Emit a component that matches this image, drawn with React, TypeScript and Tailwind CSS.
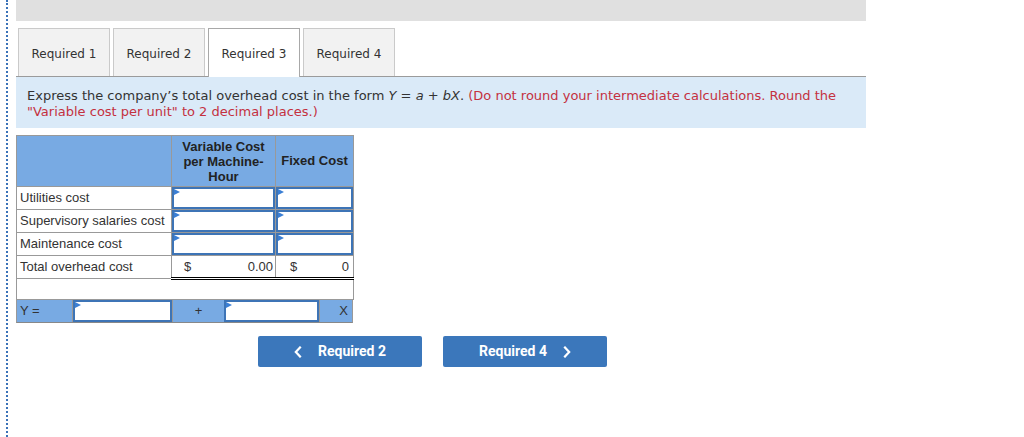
import React from "react";

const tabs = ["Required 1", "Required 2", "Required 3", "Required 4"];

const rows = ["Utilities cost", "Supervisory salaries cost", "Maintenance cost"];

const Flag = () => (
  <span className="absolute left-0 top-0 h-0 w-0 border-y-[3px] border-l-[6px] border-y-transparent border-l-[#3b7fd4]" />
);

const InputBox = ({ className = "" }: { className?: string }) => (
  <div className={`relative h-full w-full border-2 border-[#3d74b6] bg-white ${className}`}>
    <Flag />
  </div>
);

const Chevron = ({ dir }: { dir: "left" | "right" }) => (
  <svg width="8" height="12" viewBox="0 0 8 12" fill="none">
    <path
      d={dir === "left" ? "M6 1.5 L1.8 6 L6 10.5" : "M2 1.5 L6.2 6 L2 10.5"}
      stroke="white"
      strokeWidth="2.2"
      strokeLinecap="square"
    />
  </svg>
);

const App = () => {
  return (
    <div className="flex min-h-[437px] bg-white pl-[6px]">
      <div className="w-[860px] border-l-2 border-dotted border-[#3a72b8] pl-[8px]">
        <div className="h-[21px] bg-[#e0e0e0]" />

        {/* tabs */}
        <div
          className="mt-[7px] flex items-end gap-[3px] border-b border-[#9b9b9b] pl-[2px] text-[12px] text-[#333]"
          style={{ fontFamily: '"DejaVu Sans", Verdana, sans-serif' }}
        >
          {tabs.map((t) => (
            <div
              key={t}
              className={
                t === "Required 3"
                  ? "-mb-px flex h-[49px] w-[92px] items-center justify-center border border-b-0 border-[#a8a8a8] bg-white pt-[2px]"
                  : "flex h-[48px] w-[92px] items-center justify-center border border-b-0 border-[#cacaca] bg-[#f2f2f2] pt-[2px]"
              }
            >
              {t}
            </div>
          ))}
        </div>

        {/* instructions */}
        <div
          className="h-[51px] bg-[#daeaf8] px-[11px] pt-[11px] text-[13px] leading-[16px] text-[#333]"
          style={{ fontFamily: '"DejaVu Sans", Verdana, sans-serif' }}
        >
          Express the company’s total overhead cost in the form <i>Y</i> = <i>a</i> + <i>bX</i>.{" "}
          <span className="text-[#c4313f]">
            (Do not round your intermediate calculations. Round the "Variable cost per unit" to 2 decimal places.)
          </span>
        </div>

        {/* table */}
        <div
          className="mt-[7px] w-[337px] text-[13px] text-[#333]"
          style={{ fontFamily: '"Liberation Sans", Arial, sans-serif' }}
        >
          <table className="w-[337px] table-fixed border-collapse">
            <colgroup>
              <col className="w-[155px]" />
              <col className="w-[104px]" />
              <col className="w-[78px]" />
            </colgroup>
            <thead>
              <tr className="h-[51px] bg-[#78aae3]">
                <th className="border border-[#999]" />
                <th className="border border-[#999] text-center font-bold leading-[15px] text-[#222]">
                  Variable Cost
                  <br />
                  per Machine-
                  <br />
                  Hour
                </th>
                <th className="whitespace-nowrap border border-[#999] text-center font-bold text-[#222]">Fixed Cost</th>
              </tr>
            </thead>
            <tbody>
              {rows.map((r) => (
                <tr key={r} className="h-[23px]">
                  <td className="whitespace-nowrap border border-[#999] px-[3px]">{r}</td>
                  <td className="h-[23px] border border-[#999] p-0">
                    <InputBox />
                  </td>
                  <td className="h-[23px] border border-[#999] p-0">
                    <InputBox />
                  </td>
                </tr>
              ))}
              <tr className="h-[23px]">
                <td className="border border-[#999] px-[3px]">Total overhead cost</td>
                <td className="border-x border-t border-b-[3px] border-double border-x-[#999] border-t-[#999] border-b-black px-[2px]">
                  <div className="flex justify-between pl-[10px]">
                    <span>$</span>
                    <span>0.00</span>
                  </div>
                </td>
                <td className="border-x border-t border-b-[3px] border-double border-x-[#999] border-t-[#999] border-b-black px-[2px]">
                  <div className="flex justify-between pl-[12px] pr-[2px]">
                    <span>$</span>
                    <span>0</span>
                  </div>
                </td>
              </tr>
              <tr className="h-[21px]">
                <td colSpan={3} className="border border-t-0 border-[#999]" />
              </tr>
            </tbody>
          </table>

          {/* Y = a + bX row */}
          <div className="flex h-[23px] border border-t-0 border-[#999] border-b-[#888]">
            <div className="flex w-[55px] items-center bg-[#78aae3] pl-[3px]">Y =</div>
            <div className="w-[100px] border-l border-[#999]">
              <InputBox />
            </div>
            <div className="flex w-[52px] items-center justify-center border-l border-[#999] bg-[#78aae3]">+</div>
            <div className="w-[95px]">
              <InputBox />
            </div>
            <div className="flex flex-1 items-center justify-end border-l border-[#999] bg-[#78aae3] pr-[4px]">X</div>
          </div>
        </div>

        {/* nav buttons */}
        <div
          className="mt-[13px] flex gap-[21px] pl-[242px] text-[14px] font-bold text-white"
          style={{ fontFamily: "Roboto, Arial, sans-serif" }}
        >
          <button className="flex h-[31px] w-[164px] items-center justify-center gap-[16px] rounded-[2px] bg-[#3b77bb]">
            <Chevron dir="left" />
            <span>Required 2</span>
          </button>
          <button className="flex h-[31px] w-[164px] items-center justify-center gap-[16px] rounded-[2px] bg-[#3b77bb]">
            <span>Required 4</span>
            <Chevron dir="right" />
          </button>
        </div>
      </div>
    </div>
  );
};

export default App;
